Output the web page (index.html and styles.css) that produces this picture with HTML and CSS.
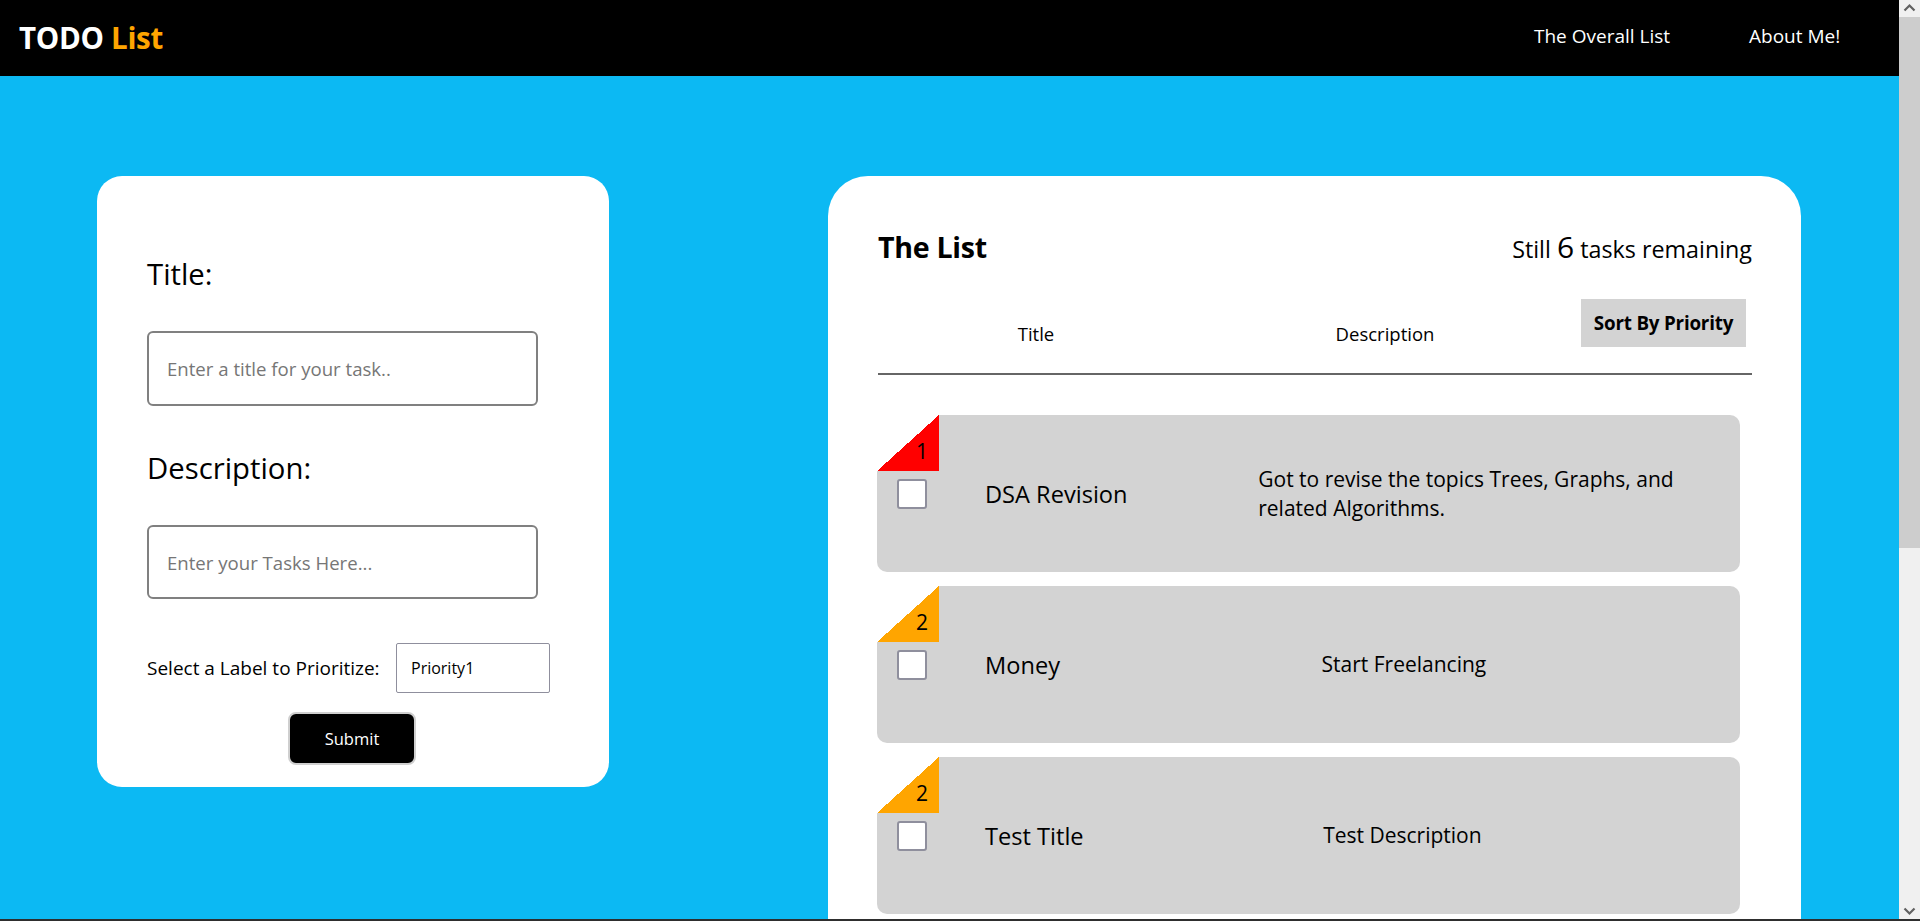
FILE: index.html
```html
<!DOCTYPE html>
<html lang="en">
<head>
<meta charset="utf-8">
<title>TODO List</title>
<link rel="stylesheet" href="styles.css">
</head>
<body>
<div class="screen">
  <div class="viewport">
    <nav class="navbar">
      <div class="logo">TODO <span class="logo-accent">List</span></div>
      <div class="nav-links">
        <a class="nav-link nav-link-list">The Overall List</a>
        <a class="nav-link nav-link-about">About Me!</a>
      </div>
    </nav>
    <main class="content">
      <form class="form-card">
        <label class="field-label">Title:</label>
        <input class="field-input" type="text" placeholder="Enter a title for your task..">
        <label class="field-label field-label-desc">Description:</label>
        <input class="field-input" type="text" placeholder="Enter your Tasks Here...">
        <div class="priority-row">
          <span class="priority-label">Select a Label to Prioritize:</span>
          <select class="priority-select"><option>Priority1</option></select>
        </div>
        <button class="submit-btn" type="button">Submit</button>
      </form>

      <section class="list-card">
        <div class="list-head">
          <h2 class="list-title">The List</h2>
          <div class="remaining">Still <span class="remaining-count">6</span> tasks remaining</div>
        </div>
        <div class="columns">
          <span class="col-title">Title</span>
          <span class="col-desc">Description</span>
          <button class="sort-btn" type="button">Sort By Priority</button>
        </div>
        <div class="divider"></div>
        <ul class="tasks">
          <li class="task">
            <span class="badge badge-red">1</span>
            <input class="task-check" type="checkbox">
            <span class="task-title">DSA Revision</span>
            <div class="task-desc-wrap"><p class="task-desc">Got to revise the topics Trees, Graphs, and related Algorithms.</p><span class="spacer"></span></div>
          </li>
          <li class="task">
            <span class="badge badge-orange">2</span>
            <input class="task-check" type="checkbox">
            <span class="task-title">Money</span>
            <div class="task-desc-wrap"><p class="task-desc">Start Freelancing</p><span class="spacer"></span></div>
          </li>
          <li class="task">
            <span class="badge badge-orange">2</span>
            <input class="task-check" type="checkbox">
            <span class="task-title">Test Title</span>
            <div class="task-desc-wrap"><p class="task-desc">Test Description</p><span class="spacer"></span></div>
          </li>
        </ul>
      </section>
    </main>
  </div>
  <div class="scrollbar">
    <div class="sb-btn">
      <svg width="21" height="17" viewBox="0 0 21 17"><polyline points="5.5,10.5 10.5,5.5 15.5,10.5" fill="none" stroke="#606060" stroke-width="2.2"/></svg>
    </div>
    <div class="sb-thumb"></div>
    <div class="sb-track"></div>
    <div class="sb-btn">
      <svg width="21" height="17" viewBox="0 0 21 17"><polyline points="5.5,6.5 10.5,11.5 15.5,6.5" fill="none" stroke="#606060" stroke-width="2.2"/></svg>
    </div>
  </div>
</div>
<div class="bottom-edge"></div>
</body>
</html>
```

FILE: styles.css
```css
* { box-sizing: border-box; }

html, body {
  margin: 0;
  padding: 0;
  height: 921px;
  overflow: hidden;
}

body {
  font-family: "Open Sans", "Noto Sans", "Liberation Sans", sans-serif;
  color: #000;
  display: flex;
  flex-direction: column;
  background: #0cb9f3;
}

.screen {
  height: 919px;
  display: flex;
  flex-direction: row;
}

.viewport {
  flex: 1;
  min-width: 0;
  background: #0cb9f3;
  overflow: hidden;
}

/* Navbar */
.navbar {
  height: 76px;
  background: #000;
  display: flex;
  align-items: center;
  justify-content: space-between;
  padding-left: 19px;
}

.logo {
  color: #fff;
  font-weight: 700;
  font-size: 29.5px;
  letter-spacing: -0.3px;
  margin-top: -2px;
}

.logo-accent { color: #ffa500; }

.nav-links {
  display: flex;
  margin-top: -4px;
}

.nav-link {
  color: #fff;
  font-size: 19px;
  text-decoration: none;
}

.nav-link-list { width: 215px; }
.nav-link-about { width: 150px; }

/* Content */
.content {
  display: flex;
  justify-content: space-between;
  align-items: flex-start;
  padding: 100px 98px 0 97px;
}

/* Form card */
.form-card {
  width: 512px;
  background: #fff;
  border-radius: 25px;
  padding: 78px 50px 22px 50px;
  display: flex;
  flex-direction: column;
}

.field-label {
  display: block;
  font-size: 29.3px;
  line-height: 40px;
}

.field-label-desc { margin-top: 42px; }

.field-input {
  margin-top: 37px;
  width: 391px;
  height: 75px;
  border: 2px solid #808080;
  border-radius: 6px;
  padding: 0 18px;
  font-family: inherit;
  font-size: 18.6px;
  color: #000;
  background: #fff;
}

.field-input + .field-label-desc + .field-input { height: 74px; }

.field-input::placeholder { color: #767676; }

.priority-row {
  margin-top: 44px;
  display: flex;
  align-items: center;
  height: 50px;
}

.priority-label {
  width: 249px;
  font-size: 19px;
}

.priority-select {
  -webkit-appearance: none;
  appearance: none;
  width: 154px;
  height: 50px;
  border: 1px solid #8f8f9d;
  border-radius: 2px;
  background: #fff;
  padding: 0 14px;
  font-family: inherit;
  font-size: 16px;
  color: #000;
}

.submit-btn {
  align-self: center;
  margin-top: 19px;
  width: 128px;
  height: 53px;
  background: #000;
  color: #fff;
  border: 2px solid #cfcfcf;
  border-radius: 8px;
  font-family: inherit;
  font-size: 16.5px;
  margin-left: -2px;
}

/* List card */
.list-card {
  width: 973px;
  height: 900px;
  background: #fff;
  border-radius: 40px;
  padding: 50px 49px 0 50px;
}

.list-head {
  display: flex;
  justify-content: space-between;
  align-items: baseline;
  height: 39px;
}

.list-title {
  margin: 0;
  font-size: 28.6px;
  line-height: 36px;
  font-weight: 700;
  letter-spacing: -0.3px;
}

.remaining {
  font-size: 23.3px;
}

.remaining-count { font-size: 30px; }

.columns {
  margin-top: 34px;
  display: grid;
  grid-template-columns: 316px 382px 1fr;
  align-items: start;
  height: 48px;
}

.col-title, .col-desc {
  text-align: center;
  font-size: 18.5px;
  line-height: 26px;
  margin-top: 22px;
}

.sort-btn {
  margin-left: 5px;
  width: 165px;
  height: 48px;
  border: none;
  background: #d3d3d3;
  font-family: inherit;
  font-weight: 700;
  font-size: 18.8px;
  letter-spacing: -0.2px;
  color: #000;
  padding: 0;
}

.divider {
  margin-top: 26px;
  height: 2px;
  background: #666;
}

.tasks {
  list-style: none;
  margin: 40px 12px 0 -1px;
  padding: 0;
  display: flex;
  flex-direction: column;
  gap: 14px;
}

.task {
  position: relative;
  height: 157px;
  background: #d3d3d3;
  border-radius: 10px;
  display: flex;
  align-items: center;
  padding-left: 20px;
}

.badge {
  position: absolute;
  left: 0;
  top: 0;
  width: 62px;
  height: 56px;
  font-size: 21px;
  line-height: 1;
  text-align: right;
  padding-right: 11px;
  padding-top: 26px;
}

.badge-red { background: linear-gradient(to bottom right, #fff 50%, #ff0000 50%); }
.badge-orange { background: linear-gradient(to bottom right, #fff 50%, #ffa500 50%); }

.task-check {
  -webkit-appearance: none;
  appearance: none;
  margin: 0 58px 0 0;
  width: 30px;
  height: 30px;
  flex: none;
  background: #fff;
  border: 2px solid #8f8f9d;
  border-radius: 3px;
}

.task-title {
  width: 252px;
  flex: none;
  font-size: 23.6px;
}

.task-desc-wrap {
  flex: 1;
  display: flex;
  justify-content: space-around;
  align-items: center;
}

.task-desc {
  margin: 0;
  max-width: 418px;
  font-size: 21px;
  line-height: 29px;
}

.spacer { width: 0; }

/* Scrollbar */
.scrollbar {
  width: 21px;
  flex: none;
  background: #f0f0f0;
  display: flex;
  flex-direction: column;
}

.sb-btn {
  height: 17px;
  flex: none;
}

.sb-btn svg { display: block; }

.sb-thumb {
  height: 531px;
  background: #cdcdcd;
  flex: none;
}

.sb-track { flex: 1; }

.bottom-edge {
  height: 2px;
  background: #2e2e2e;
}
```
